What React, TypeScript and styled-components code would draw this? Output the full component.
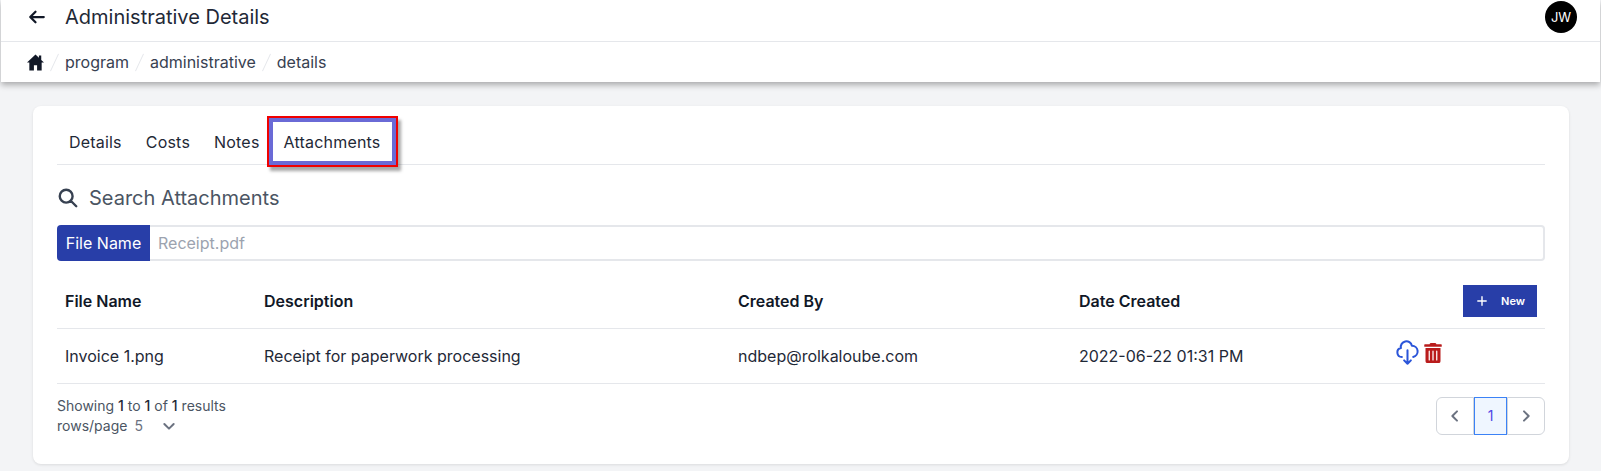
import {Fragment} from "react";
import styled, {createGlobalStyle} from "styled-components";
import {FaTrashAlt} from "react-icons/fa";
import {
    HiOutlineArrowLeft,
    HiOutlineChevronDown,
    HiOutlineChevronLeft,
    HiOutlineChevronRight,
    HiOutlineCloudDownload,
    HiOutlineSearch,
    HiPlus
} from "react-icons/hi";

const GlobalStyle = createGlobalStyle`
  html, body {
    margin: 0;
    padding: 0;
    background: #f3f4f6;
    font-family: Inter, "Liberation Sans", sans-serif;
    color: #111827;
    overflow: hidden;
  }
  * { box-sizing: border-box; }
`
const Page = styled.div`
  width: 1601px;
  height: 471px;
  overflow: hidden;
`
const Header = styled.header`
  margin: 0 1px;
  background: #fff;
  box-shadow: 0 3px 6px rgba(0, 0, 0, 0.3);
`
const TopBar = styled.div`
  height: 42px;
  display: flex;
  align-items: center;
  justify-content: space-between;
  padding: 0 23px 8px 27px;
  border-bottom: 1px solid #e5e7eb;
`
const TitleGroup = styled.div`
  display: flex;
  align-items: center;
  gap: 19px;
`
const PageTitle = styled.h1`
  margin: 0;
  font-size: 20px;
  font-weight: 400;
  line-height: 24px;
  color: #1f2937;
`
const Avatar = styled.div`
  width: 32px;
  height: 32px;
  border-radius: 50%;
  background: #000;
  color: #fff;
  font-size: 13px;
  display: flex;
  align-items: center;
  justify-content: center;
`
const Breadcrumbs = styled.nav`
  height: 40px;
  display: flex;
  align-items: center;
  padding-left: 26px;
  font-size: 16px;
  color: #374151;
`
const Slash = styled.span`
  width: 1px;
  height: 19px;
  background: #e5e7eb;
  transform: rotate(25deg);
  margin: 0 10px;
`
const Card = styled.main`
  margin: 24px 32px 0 33px;
  background: #fff;
  border-radius: 8px;
  padding: 15px 24px 28px;
  box-shadow: 0 1px 3px rgba(0, 0, 0, 0.1);
`
const Tabs = styled.div`
  display: flex;
  padding-bottom: 2px;
  border-bottom: 1px solid #e5e7eb;
`
const Tab = styled.button<{$active?: boolean}>`
  border: none;
  background: #fff;
  font: inherit;
  font-size: 16px;
  letter-spacing: 0.2px;
  color: #1f2937;
  padding: 0 12px;
  height: 41px;
  position: relative;
  ${({$active}) => $active && `
    box-shadow: inset 0 0 0 1px #6a6ad6, 0 0 0 3px #6a6ad6, 0 0 0 5px #f00000, 3px 4px 3px 5px rgba(0, 0, 0, 0.35);
  `}
`
const SearchTitle = styled.div`
  display: flex;
  align-items: center;
  gap: 10px;
  margin-top: 20px;
  height: 26px;
  font-size: 20px;
  color: #4b5563;
`
const SearchRow = styled.div`
  display: flex;
  height: 36px;
  margin-top: 14px;
`
const SearchLabel = styled.div`
  background: #283ea8;
  color: #fff;
  font-size: 16px;
  width: 93px;
  display: flex;
  align-items: center;
  justify-content: center;
  border-radius: 4px 0 0 4px;
`
const SearchInput = styled.input`
  flex: 1;
  border: 2px solid #e5e7eb;
  border-left: none;
  border-radius: 0 4px 4px 0;
  font: inherit;
  font-size: 16px;
  padding: 0 8px;
  outline: none;
  &::placeholder { color: #9ca3af; }
`
const Table = styled.table`
  width: 100%;
  border-collapse: collapse;
  table-layout: fixed;
  margin-top: 13px;
  font-size: 16px;
  color: #1f2937;
`
const Th = styled.th<{$w: number}>`
  width: ${({$w}) => $w}px;
  text-align: left;
  font-weight: 600;
  height: 54px;
  padding: 0 8px;
  color: #111827;
  border-bottom: 1px solid #e5e7eb;
`
const Td = styled.td`
  height: 55px;
  padding: 0 8px;
  border-bottom: 1px solid #e5e7eb;
`
const NewButton = styled.button`
  width: 74px;
  height: 32px;
  margin-left: auto;
  border: none;
  background: #283ea8;
  color: #fff;
  font: inherit;
  font-size: 11px;
  font-weight: 600;
  display: flex;
  align-items: center;
  justify-content: center;
  gap: 12px;
`
const Actions = styled.div`
  display: flex;
  align-items: center;
  gap: 2px;
  margin: -6px 0 0 -4px;
`
const Footer = styled.div`
  display: flex;
  justify-content: space-between;
  margin-top: 12px;
`
const Results = styled.div`
  font-size: 14px;
  line-height: 20px;
  color: #4b5563;
`
const Strong = styled.span`
  color: #1f2937;
  font-weight: 500;
`
const RowsPerPage = styled.div`
  display: flex;
  align-items: center;
`
const RowsValue = styled.span`
  color: #6b7280;
  margin: 0 18px 0 7px;
`
const Pager = styled.div`
  display: flex;
  height: 38px;
  margin-top: 1px;
`
const PagerButton = styled.button<{$side?: "left" | "right"; $active?: boolean}>`
  width: ${({$active}) => ($active ? 33 : 38)}px;
  border: 1px solid ${({$active}) => ($active ? "#3b82f6" : "#d1d5db")};
  background: ${({$active}) => ($active ? "#eff6ff" : "#fff")};
  color: ${({$active}) => ($active ? "#4f46e5" : "#6b7280")};
  font: inherit;
  font-size: 14px;
  display: flex;
  align-items: center;
  justify-content: center;
  padding: 0;
  border-radius: ${({$side}) => ($side === "left" ? "6px 0 0 6px" : $side === "right" ? "0 6px 6px 0" : "0")};
`

const crumbs = ["program", "administrative", "details"]

function HomeIcon() {
    return <svg width="17" height="17" viewBox="0 0 16 16" fill="#111827">
        <path d="M8 .5 0 8h2.2v7.5h4.3v-5h3v5h4.3V8H16l-2.6-2.4V1.5h-2.2v2z"/>
    </svg>
}

export default function App() {
    return <Page>
        <GlobalStyle/>
        <Header>
            <TopBar>
                <TitleGroup>
                    <HiOutlineArrowLeft size={18} color="#111827" strokeWidth={3}/>
                    <PageTitle>Administrative Details</PageTitle>
                </TitleGroup>
                <Avatar>JW</Avatar>
            </TopBar>
            <Breadcrumbs>
                <HomeIcon/>
                {crumbs.map(c => <Fragment key={c}>
                    <Slash/>
                    {c}
                </Fragment>)}
            </Breadcrumbs>
        </Header>
        <Card>
            <Tabs>
                <Tab>Details</Tab>
                <Tab>Costs</Tab>
                <Tab>Notes</Tab>
                <Tab $active>Attachments</Tab>
            </Tabs>
            <SearchTitle>
                <HiOutlineSearch size={22} color="#374151" strokeWidth={2.6}/>
                Search Attachments
            </SearchTitle>
            <SearchRow>
                <SearchLabel>File Name</SearchLabel>
                <SearchInput placeholder="Receipt.pdf"/>
            </SearchRow>
            <Table>
                <thead>
                    <tr>
                        <Th $w={199}>File Name</Th>
                        <Th $w={474}>Description</Th>
                        <Th $w={341}>Created By</Th>
                        <Th $w={319}>Date Created</Th>
                        <Th $w={155}><NewButton><HiPlus size={14}/>New</NewButton></Th>
                    </tr>
                </thead>
                <tbody>
                    <tr>
                        <Td>Invoice 1.png</Td>
                        <Td>Receipt for paperwork processing</Td>
                        <Td>ndbep@rolkaloube.com</Td>
                        <Td>2022-06-22 01:31 PM</Td>
                        <Td>
                            <Actions>
                                <HiOutlineCloudDownload size={27} color="#2b55d9" strokeWidth={1.8}/>
                                <FaTrashAlt size={20} color="#b91c1c"/>
                            </Actions>
                        </Td>
                    </tr>
                </tbody>
            </Table>
            <Footer>
                <Results>
                    Showing <Strong>1</Strong> to <Strong>1</Strong> of <Strong>1</Strong> results
                    <RowsPerPage>
                        rows/page
                        <RowsValue>5</RowsValue>
                        <HiOutlineChevronDown size={16} color="#6b7280" strokeWidth={3}/>
                    </RowsPerPage>
                </Results>
                <Pager>
                    <PagerButton $side="left"><HiOutlineChevronLeft size={16} strokeWidth={3}/></PagerButton>
                    <PagerButton $active>1</PagerButton>
                    <PagerButton $side="right"><HiOutlineChevronRight size={16} strokeWidth={3}/></PagerButton>
                </Pager>
            </Footer>
        </Card>
    </Page>
}
